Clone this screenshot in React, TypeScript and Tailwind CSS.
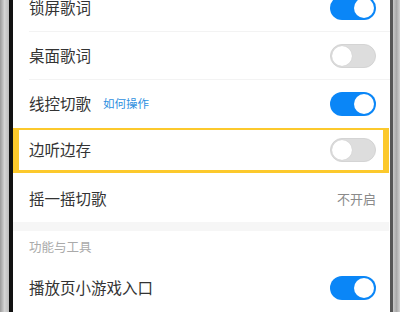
import type { ReactNode } from "react";

const font = { fontFamily: '"Noto Sans CJK SC", "Noto Sans", sans-serif' };

function Toggle({ on }: { on: boolean }) {
  return on ? (
    <div className="w-[46px] h-[24px] rounded-full bg-[#0a86f7] flex items-center justify-end pr-[2px]">
      <div className="w-[20px] h-[20px] rounded-full bg-white" />
    </div>
  ) : (
    <div className="w-[46px] h-[24px] rounded-full bg-[#dddddd] border border-[#d4d4d4] flex items-center pl-[1px]">
      <div className="w-[20px] h-[20px] rounded-full bg-white shadow-[0_0_1px_rgba(0,0,0,0.15)]" />
    </div>
  );
}

function Row({ label, extra, right, divider = true, first = false }: {
  label: string;
  extra?: ReactNode;
  right: ReactNode;
  divider?: boolean;
  first?: boolean;
}) {
  return (
    <div className={`pl-4 ${first ? "mt-[-16px]" : ""}`}>
      <div className={`h-12 flex items-center justify-between pr-[14px] ${divider ? "border-b border-[#f3f3f3]" : ""}`}>
        <div className="flex items-center gap-[12px]">
          <span className="text-[15.5px] text-[#333]">{label}</span>
          {extra}
        </div>
        {right}
      </div>
    </div>
  );
}

export default function App() {
  return (
    <div className="flex w-[400px] h-[312px] overflow-hidden" style={font}>
      {/* ── Left frame ── */}
      <div className="w-[9px] bg-gradient-to-r from-[#9a9a9a] via-[#d4d4d4] to-[#bdbdbd]" />
      <div className="w-[4px] bg-[#111]" />

      {/* ── Settings list ── */}
      <div className="flex-1 bg-white flex flex-col">
        <Row first label="锁屏歌词" right={<Toggle on />} />
        <Row label="桌面歌词" right={<Toggle on={false} />} />
        <Row
          label="线控切歌"
          extra={<span className="text-[11.5px] text-[#2f8fe0]">如何操作</span>}
          right={<Toggle on />}
          divider={false}
        />

        {/* highlighted row */}
        <div className="mr-px h-[46px] border-[#fcc92c] border-t-2 border-b-[3px] border-l-[6px] border-r-[6px] flex items-center justify-between pl-[10px] pr-[7px]">
          <span className="text-[15.5px] text-[#333]">边听边存</span>
          <Toggle on={false} />
        </div>

        <div className="pl-4">
          <div className="h-[49px] pt-[3px] flex items-center justify-between pr-[14px]">
            <span className="text-[15.5px] text-[#333]">摇一摇切歌</span>
            <span className="text-[13px] text-[#8a8a8a]">不开启</span>
          </div>
        </div>

        <div className="h-[9px] mr-px bg-[#f6f6f6]" />

        <div className="h-[34px] flex items-center pl-4">
          <span className="text-[12.5px] text-[#aaa]">功能与工具</span>
        </div>

        <Row label="播放页小游戏入口" right={<Toggle on />} divider={false} />
      </div>

      {/* ── Right frame ── */}
      <div className="w-[3px] bg-[#555]" />
      <div className="w-[7px] bg-gradient-to-r from-[#c8c8c8] via-[#a8a8a8] to-[#d0d0d0]" />
    </div>
  );
}
